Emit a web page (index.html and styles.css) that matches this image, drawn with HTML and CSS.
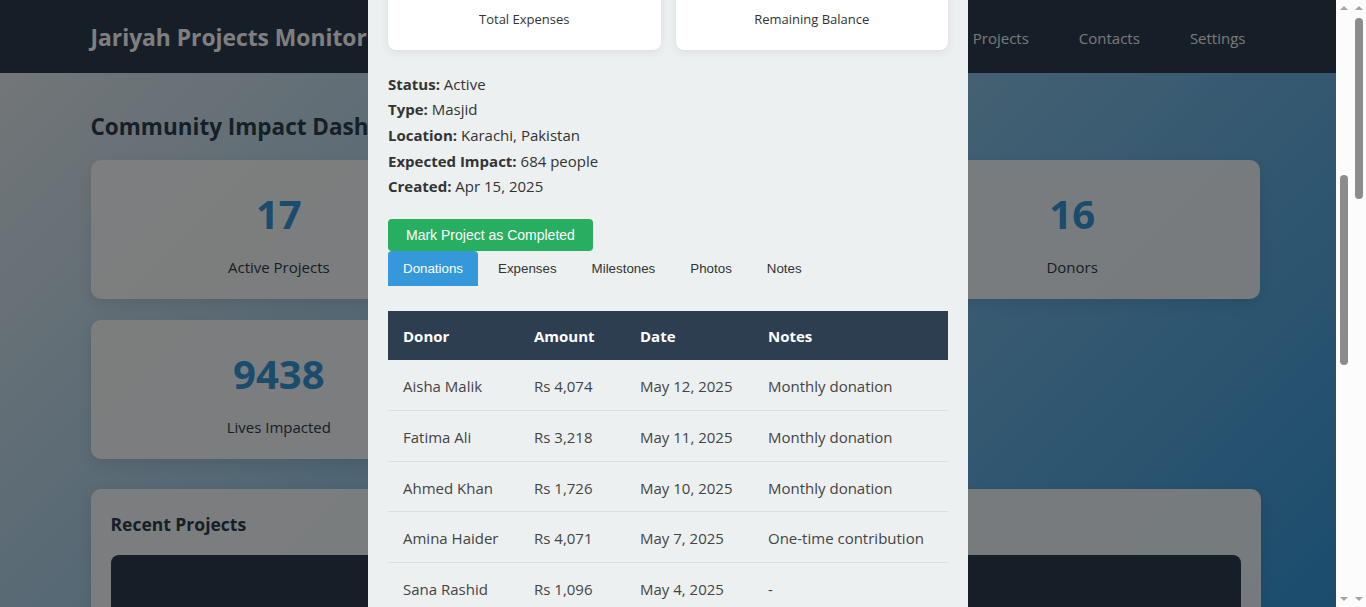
FILE: index.html
```html
<!DOCTYPE html>
<html lang="en">
<head>
<meta charset="utf-8">
<title>Jariyah Projects Monitor</title>
<link rel="stylesheet" href="styles.css">
</head>
<body>
<div class="window">
  <div class="viewport">
    <header class="site-header">
      <div class="container header-inner">
        <h1 class="brand">Jariyah Projects Monitor</h1>
        <nav class="nav">
          <a href="#">Dashboard</a>
          <a href="#">Projects</a>
          <a href="#">Contacts</a>
          <a href="#">Settings</a>
        </nav>
      </div>
    </header>

    <main class="container main">
      <h2 class="page-title">Community Impact Dashboard</h2>
      <div class="stats">
        <div class="stat"><div class="stat-num">17</div><div class="stat-label">Active Projects</div></div>
        <div class="stat"><div class="stat-num">Rs 1.2M</div><div class="stat-label">Total Donations</div></div>
        <div class="stat"><div class="stat-num">16</div><div class="stat-label">Donors</div></div>
        <div class="stat"><div class="stat-num">9438</div><div class="stat-label">Lives Impacted</div></div>
        <div class="stat"><div class="stat-num">5</div><div class="stat-label">Completed Projects</div></div>
      </div>

      <section class="panel">
        <h3>Recent Projects</h3>
        <div class="project-list">
          <article class="project-item">
            <h4>Masjid Al-Noor</h4>
            <p>Karachi, Pakistan &middot; Masjid</p>
          </article>
          <article class="project-item">
            <h4>Clean Water Well</h4>
            <p>Thar, Pakistan &middot; Water</p>
          </article>
        </div>
      </section>
    </main>

    <div class="overlay">
      <div class="overlay-scroll">
        <div class="modal">
          <div class="modal-head">
            <h2>Masjid Al-Noor Renovation</h2>
            <button class="close" type="button">&times;</button>
          </div>
          <p class="desc">Renovation of the main prayer hall, wudu area and roof of Masjid Al-Noor, serving the local community of Karachi.</p>
          <div class="progress-block">
            <div class="progress-text">Progress: 62% of Rs 25,000 target</div>
            <div class="progress"><div class="progress-bar" style="width:62%"></div></div>
          </div>
          <div class="summary">
            <div class="sum"><div class="sum-val">Rs 25000</div><div class="sum-label">Target Amount</div></div>
            <div class="sum"><div class="sum-val">Rs 15505</div><div class="sum-label">Total Donations</div></div>
            <div class="sum"><div class="sum-val">Rs 6240</div><div class="sum-label">Total Expenses</div></div>
            <div class="sum"><div class="sum-val">Rs 9265</div><div class="sum-label">Remaining Balance</div></div>
          </div>
          <div class="info">
            <div><strong>Status:</strong> Active</div>
            <div><strong>Type:</strong> Masjid</div>
            <div><strong>Location:</strong> Karachi, Pakistan</div>
            <div><strong>Expected Impact:</strong> 684 people</div>
            <div><strong>Created:</strong> Apr 15, 2025</div>
          </div>
          <button class="btn-complete" type="button">Mark Project as Completed</button>
          <div class="tabs">
            <button class="tab active" type="button">Donations</button>
            <button class="tab" type="button">Expenses</button>
            <button class="tab" type="button">Milestones</button>
            <button class="tab" type="button">Photos</button>
            <button class="tab" type="button">Notes</button>
          </div>
          <table class="dtable">
            <thead><tr><th class="c-donor">Donor</th><th class="c-amount">Amount</th><th class="c-date">Date</th><th>Notes</th></tr></thead>
            <tbody>
              <tr><td>Aisha Malik</td><td>Rs 4,074</td><td>May 12, 2025</td><td>Monthly donation</td></tr>
              <tr><td>Fatima Ali</td><td>Rs 3,218</td><td>May 11, 2025</td><td>Monthly donation</td></tr>
              <tr><td>Ahmed Khan</td><td>Rs 1,726</td><td>May 10, 2025</td><td>Monthly donation</td></tr>
              <tr><td>Amina Haider</td><td>Rs 4,071</td><td>May 7, 2025</td><td>One-time contribution</td></tr>
              <tr><td>Sana Rashid</td><td>Rs 1,096</td><td>May 4, 2025</td><td>-</td></tr>
              <tr><td>Usman Tariq</td><td>Rs 620</td><td>May 2, 2025</td><td>-</td></tr>
              <tr><td>Zainab Qureshi</td><td>Rs 700</td><td>Apr 28, 2025</td><td>Zakat</td></tr>
            </tbody>
          </table>
        </div>
      </div>
      <div class="scrollbar">
        <span class="arrow up"></span>
        <div class="track"><div class="thumb thumb-overlay"></div></div>
        <span class="arrow down"></span>
      </div>
    </div>
  </div>
  <div class="scrollbar">
    <span class="arrow up"></span>
    <div class="track"><div class="thumb thumb-page"></div></div>
    <span class="arrow down"></span>
  </div>
</div>
<script src="script.js"></script>
</body>
</html>
```
FILE: styles.css
```css
* { box-sizing: border-box; }
html, body { margin: 0; height: 100%; }
body {
  font-family: "Open Sans", "Liberation Sans", sans-serif;
  font-size: 15px;
  line-height: 25.6px;
  color: #333;
  overflow: hidden;
}
.window { display: flex; height: 100vh; overflow: hidden; }
.viewport {
  flex: 1;
  position: relative;
  overflow: hidden;
  background: linear-gradient(135deg, #ecf0f1 0%, #3498db 100%);
}
.container { max-width: 1200px; margin: 0 auto; padding: 0 15px; }

/* fake scrollbars */
.scrollbar {
  width: 15px;
  flex: 0 0 15px;
  background: #fcfcfc;
  display: flex;
  flex-direction: column;
  align-items: center;
  position: relative;
  z-index: 2;
}
.arrow { width: 0; height: 0; border-left: 4.5px solid transparent; border-right: 4.5px solid transparent; }
.arrow.up { margin: 6px 0 5px; border-bottom: 4px solid #a3a3a3; }
.arrow.down { margin: 5px 0 6px; border-top: 4px solid #a3a3a3; }
.track { flex: 1; width: 100%; display: flex; flex-direction: column; align-items: center; }
.thumb { width: 8px; background: #8c8c8c; border-radius: 4px; }
.thumb-page { margin-top: 3px; height: 181px; }
.thumb-overlay { margin-top: 160px; height: 190px; }

.site-header { background: #2c3e50; color: #fff; }
.header-inner { display: flex; justify-content: space-between; align-items: center; height: 73px; padding-top: 3px; }
.brand { margin: 0; font-size: 22.8px; line-height: 36px; font-weight: 700; }
.nav { display: flex; }
.nav a { color: #ecf0f1; text-decoration: none; padding: 8px 15px; margin-left: 20px; font-size: 15px; line-height: 27px; }

.main { padding-top: 40px; padding-bottom: 40px; }
.page-title { margin: 0 0 18px; font-size: 22.5px; line-height: 28.8px; color: #2c3e50; font-weight: 700; }
.stats { display: grid; grid-template-columns: repeat(3, 1fr); gap: 21px 20px; }
.stat {
  background: rgba(255, 255, 255, 0.9);
  border-radius: 10px;
  padding: 22px 20px 20px;
  text-align: center;
  box-shadow: 0 5px 15px rgba(0, 0, 0, 0.1);
}
.stat-num { font-size: 40px; line-height: 64px; font-weight: 700; color: #3498db; margin-bottom: 10px; }
.stat-label { font-size: 15px; line-height: 23px; color: #2c3e50; }

.panel {
  margin-top: 30px;
  background: rgba(255, 255, 255, 0.9);
  border-radius: 10px;
  padding: 20px;
  box-shadow: 0 5px 15px rgba(0, 0, 0, 0.1);
}
.panel h3 { margin: 0 0 15px; font-size: 17.5px; line-height: 30.7px; color: #2c3e50; }
.project-list { display: flex; flex-direction: column; gap: 15px; }
.project-item {
  background: #2c3e50;
  color: #fff;
  border-radius: 8px;
  padding: 60px 20px 20px;
  text-align: center;
}
.project-item h4 { margin: 0; font-size: 18px; }
.project-item p { margin: 0; color: #bdc3c7; }

/* modal */
.overlay {
  position: absolute;
  inset: 0;
  display: flex;
  background: rgba(0, 0, 0, 0.5);
  z-index: 10;
}
.overlay-scroll { flex: 1; overflow: hidden; }
.modal {
  width: 600px;
  margin: 40px auto;
  background: #ecf0f1;
  border-radius: 10px;
  padding: 20px;
}
.modal-head { display: flex; justify-content: space-between; align-items: center; margin-bottom: 15px; }
.modal-head h2 { margin: 0; font-size: 22px; line-height: 38px; color: #2c3e50; }
.close { border: none; background: none; font-size: 28px; line-height: 28px; color: #7f8c8d; }
.desc { margin: 0 0 15px; }
.progress-block { margin-bottom: 20px; }
.progress-text { margin-bottom: 8px; }
.progress { height: 20px; background: #dfe6e9; border-radius: 10px; overflow: hidden; }
.progress-bar { height: 100%; background: #27ae60; }

.summary { display: grid; grid-template-columns: 1fr 1fr; gap: 15px; margin-bottom: 21px; }
.sum {
  background: #fff;
  border-radius: 8px;
  padding: 20px;
  text-align: center;
  box-shadow: 0 2px 10px rgba(0, 0, 0, 0.08);
}
.sum-val { font-size: 22px; line-height: 38px; font-weight: 700; color: #2c3e50; margin-bottom: 8px; }
.sum-label { font-size: 13px; line-height: 22px; color: #333; }

.info { color: #333; }
.info div { padding-top: 1px; margin-bottom: -1px; }
.info strong { font-weight: 700; }

.btn-complete {
  display: block;
  margin-top: 20px;
  background: #27ae60;
  color: #fff;
  border: none;
  border-radius: 4px;
  padding: 8px 18px;
  font-family: "Liberation Sans", Arial, sans-serif;
  font-size: 14px;
  line-height: 16px;
}
.tabs { display: flex; margin-bottom: 25px; }
.tab {
  font-family: "Liberation Sans", Arial, sans-serif;
  font-size: 13.33px;
  padding: 10px 15px;
  margin-right: 5px;
  border: none;
  background: none;
  color: #333;
  border-radius: 4px 4px 0 0;
}
.tab.active { background: #3498db; color: #fff; }

.dtable { width: 100%; border-collapse: collapse; }
.dtable th, .dtable td { text-align: left; line-height: 25.6px; }
.dtable th { background: #2c3e50; color: #fff; font-weight: 700; padding: 13px 15px 11px; }
.dtable td { border-bottom: 1px solid #ddd; color: #444; padding: 14px 15px 10px; }
.dtable .c-donor { width: 131px; }
.dtable .c-amount { width: 106px; }
.dtable .c-date { width: 128px; }
```
FILE: script.js
```js
var scroller = document.querySelector('.overlay-scroll');
var summary = document.querySelector('.summary');
scroller.scrollTop = summary.getBoundingClientRect().bottom - 50;
```
